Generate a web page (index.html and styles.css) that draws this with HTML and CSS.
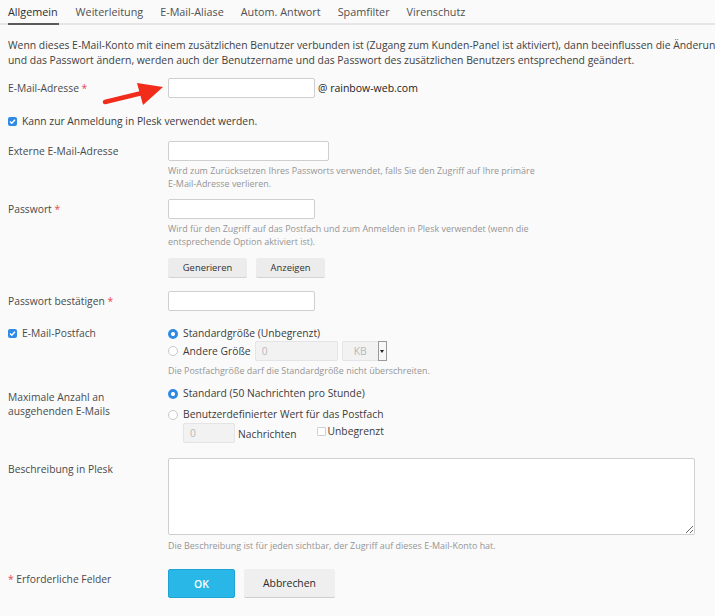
FILE: index.html
```html
<!DOCTYPE html>
<html lang="de">
<head>
<meta charset="utf-8">
<title>E-Mail-Konto</title>
<link rel="stylesheet" href="styles.css">
</head>
<body>
<nav class="tabs">
  <a class="tab active">Allgemein</a>
  <a class="tab">Weiterleitung</a>
  <a class="tab">E-Mail-Aliase</a>
  <a class="tab">Autom. Antwort</a>
  <a class="tab">Spamfilter</a>
  <a class="tab">Virenschutz</a>
</nav>

<p class="intro"><span class="line">Wenn dieses E-Mail-Konto mit einem zusätzlichen Benutzer verbunden ist (Zugang zum Kunden-Panel ist aktiviert), dann beeinflussen die Änderungen</span><span class="line">und das Passwort ändern, werden auch der Benutzername und das Passwort des zusätzlichen Benutzers entsprechend geändert.</span></p>

<form class="form">
  <div class="row row-email">
    <div class="lbl">E-Mail-Adresse <span class="req">*</span></div>
    <div class="ctl inline">
      <input class="inp w-std" type="text">
      <span class="domain">@ rainbow-web.com</span>
    </div>
    <svg class="arrow" width="70" height="32" viewBox="0 0 70 32">
      <line x1="5" y1="24" x2="42" y2="15" stroke="#f22c1a" stroke-width="4.5" stroke-linecap="round"/>
      <polygon points="37,5 63,9 43,27" fill="#f22c1a"/>
    </svg>
  </div>

  <div class="check-row row-login">
    <span class="cb on"><svg width="9" height="9" viewBox="0 0 9 9"><path d="M2 4.6 L3.8 6.3 L7 2.8" fill="none" stroke="#fff" stroke-width="1.4"/></svg></span>
    <span>Kann zur Anmeldung in Plesk verwendet werden.</span>
  </div>

  <div class="row row-ext">
    <div class="lbl">Externe E-Mail-Adresse</div>
    <div class="ctl">
      <input class="inp w-ext" type="text">
      <div class="hint">Wird zum Zurücksetzen Ihres Passworts verwendet, falls Sie den Zugriff auf Ihre primäre<br>E-Mail-Adresse verlieren.</div>
    </div>
  </div>

  <div class="row row-pw">
    <div class="lbl">Passwort <span class="req">*</span></div>
    <div class="ctl">
      <input class="inp w-std" type="password">
      <div class="hint">Wird für den Zugriff auf das Postfach und zum Anmelden in Plesk verwendet (wenn die<br>entsprechende Option aktiviert ist).</div>
      <div class="btns">
        <button type="button" class="btn btn-gen">Generieren</button>
        <button type="button" class="btn btn-show">Anzeigen</button>
      </div>
    </div>
  </div>

  <div class="row row-pw2">
    <div class="lbl">Passwort bestätigen <span class="req">*</span></div>
    <div class="ctl">
      <input class="inp w-std" type="password">
    </div>
  </div>

  <div class="row row-box">
    <div class="lbl lbl-check">
      <span class="cb on"><svg width="9" height="9" viewBox="0 0 9 9"><path d="M2 4.6 L3.8 6.3 L7 2.8" fill="none" stroke="#fff" stroke-width="1.4"/></svg></span>
      <span>E-Mail-Postfach</span>
    </div>
    <div class="ctl">
      <div class="opt opt-first"><span class="rd on"></span><span>Standardgröße (Unbegrenzt)</span></div>
      <div class="opt opt-size">
        <span class="rd"></span><span>Andere Größe</span>
        <span class="inp inp-dis w-size">0</span>
        <span class="sel">
          <span class="sel-val">KB</span>
          <span class="sel-arr"><span class="tri"></span></span>
        </span>
      </div>
      <div class="hint hint-box">Die Postfachgröße darf die Standardgröße nicht überschreiten.</div>
    </div>
  </div>

  <div class="row row-max">
    <div class="lbl lbl-max">Maximale Anzahl an<br>ausgehenden E-Mails</div>
    <div class="ctl">
      <div class="opt"><span class="rd on"></span><span>Standard (50 Nachrichten pro Stunde)</span></div>
      <div class="opt opt-custom"><span class="rd"></span><span>Benutzerdefinierter Wert für das Postfach</span></div>
      <div class="custom">
        <span class="inp inp-dis inp-num">0</span>
        <span class="unit">Nachrichten</span>
        <span class="cb-small"></span>
        <span class="unl">Unbegrenzt</span>
      </div>
    </div>
  </div>

  <div class="row row-desc">
    <div class="lbl lbl-desc">Beschreibung in Plesk</div>
    <div class="ctl">
      <textarea class="ta"></textarea>
      <div class="hint hint-desc">Die Beschreibung ist für jeden sichtbar, der Zugriff auf dieses E-Mail-Konto hat.</div>
    </div>
  </div>

  <div class="row row-foot">
    <div class="lbl"><span class="req">*</span> Erforderliche Felder</div>
    <div class="ctl foot-btns">
      <button type="button" class="btn-ok">OK</button>
      <button type="button" class="btn-cancel">Abbrechen</button>
    </div>
  </div>
</form>
</body>
</html>
```

FILE: styles.css
```css
html, body {
  margin: 0;
  padding: 0;
  background: #fafafa;
  overflow: hidden;
}

body {
  font-family: "Open Sans", "DejaVu Sans", sans-serif;
  font-size: 10.3px;
  color: #3c3c3c;
  width: 715px;
  height: 616px;
  position: relative;
}

.tabs {
  display: flex;
  gap: 17px;
  padding: 0 8px;
  border-bottom: 2px solid #e6e6e6;
  height: 23px;
}

.tab {
  display: block;
  font-size: 10.8px;
  line-height: 14px;
  padding: 5px 0 0;
  color: #505050;
  height: 23px;
  box-sizing: border-box;
  cursor: pointer;
}

.tab.active {
  color: #2e2e2e;
  border-bottom: 2px solid #5a5a5a;
  height: 25px;
  padding-right: 1px;
}

.intro {
  margin: 12.5px 0 0;
  padding: 0 8px;
  line-height: 15px;
  font-size: 10.4px;
  color: #3f3f3f;
}

.intro .line {
  display: block;
  white-space: nowrap;
}

.form {
  padding: 0 8px;
}

.row {
  display: grid;
  grid-template-columns: 160px 1fr;
  position: relative;
}

.lbl {
  line-height: 15px;
  padding-top: 3px;
  color: #4a4a4a;
  align-self: start;
}

.req {
  color: #e8474f;
}

.ctl {
  min-width: 0;
}

.inline {
  display: flex;
  align-items: center;
  gap: 3px;
}

.inp {
  display: block;
  box-sizing: border-box;
  height: 20px;
  border: 1px solid #cfcfcf;
  border-radius: 2px;
  background: #fff;
  padding: 0 6px;
  font: inherit;
  margin: 0;
  outline: none;
}

.w-std { width: 147px; }
.w-ext { width: 161px; }
.w-size { width: 83px; }

.domain {
  color: #222;
  font-size: 10.5px;
}

.arrow {
  position: absolute;
  left: 92px;
  top: 0;
}

.row-email { margin-top: 10.5px; }

.check-row {
  display: flex;
  align-items: center;
  gap: 5px;
  line-height: 15px;
  margin-top: 15.5px;
  color: #3c3c3c;
}

.cb {
  width: 9px;
  height: 9px;
  border-radius: 2px;
  background: #2f8ae6;
  display: inline-flex;
  flex: none;
}

.row-ext { margin-top: 12.5px; }

.hint {
  font-size: 8.95px;
  line-height: 12.5px;
  color: #959595;
  margin-top: 4px;
}

.row-pw { margin-top: 9px; }

.btns {
  display: flex;
  gap: 9px;
  margin-top: 10px;
}

.btn {
  height: 20px;
  box-sizing: border-box;
  border: none;
  border-bottom: 1px solid #d3d3d3;
  border-radius: 2px;
  background: #ececec;
  font-family: inherit;
  font-size: 9.4px;
  color: #333;
  padding: 0;
  cursor: pointer;
}

.btn-gen { width: 79px; }
.btn-show { width: 69px; }

.row-pw2 { margin-top: 13px; }

.row-box { margin-top: 15px; }

.lbl-check {
  display: flex;
  align-items: center;
  gap: 5px;
  padding-top: 0;
}

.opt {
  display: flex;
  align-items: center;
  gap: 5px;
  line-height: 15px;
  color: #3c3c3c;
}

.opt-size {
  height: 20px;
}

.rd {
  width: 10px;
  height: 10px;
  box-sizing: border-box;
  border-radius: 50%;
  border: 1px solid #c9c9c9;
  background: #fff;
  flex: none;
}

.rd.on {
  border: none;
  background: radial-gradient(circle, #fff 0 1.8px, #2f8ae6 2.3px);
}

.inp-dis {
  background: #f2f2f2;
  border-color: #e4e4e4;
  color: #b8b8b8;
  line-height: 18px;
  margin-left: -1px;
}

.inp-num {
  width: 52px;
  margin-left: 0;
}

.sel {
  display: flex;
  height: 20px;
  margin-left: -1px;
}

.sel-val {
  width: 36px;
  box-sizing: border-box;
  border: 1px solid #e4e4e4;
  border-right: none;
  background: #f2f2f2;
  color: #b8b8b8;
  text-align: center;
  line-height: 18px;
  border-radius: 2px 0 0 2px;
}

.sel-arr {
  width: 9px;
  box-sizing: border-box;
  border: 1px solid #9a9a9a;
  background: #f7f7f7;
  display: flex;
  align-items: center;
  justify-content: center;
}

.tri {
  width: 0;
  height: 0;
  border-left: 2.5px solid transparent;
  border-right: 2.5px solid transparent;
  border-top: 3px solid #222;
}

.hint-box { margin-top: 3.5px; }

.row-max { margin-top: 9px; }

.lbl-max {
  line-height: 14px;
  padding-top: 3.5px;
}

.opt-custom { margin-top: 6px; }

.custom {
  display: flex;
  align-items: center;
  margin-top: 1px;
  padding-left: 15px;
}

.unit {
  margin-left: 3px;
  padding-top: 2px;
}

.cb-small {
  width: 7px;
  height: 7px;
  border: 1px solid #d0d0d0;
  background: #fff;
  border-radius: 1px;
  margin-left: 20px;
  margin-top: -4px;
}

.unl {
  margin-left: 2px;
  margin-top: -4px;
}

.row-desc { margin-top: 15px; }

.lbl-desc {
  padding-top: 4px;
}

.ta {
  display: block;
  width: 527px;
  height: 77px;
  box-sizing: border-box;
  border: 1px solid #cfcfcf;
  border-radius: 2px;
  background: #fff;
  margin: 0;
  font: inherit;
  resize: both;
}

.hint-desc {
  margin-top: 3.5px;
  line-height: 13px;
}

.row-foot { margin-top: 17.5px; }

.foot-btns {
  display: flex;
  gap: 9px;
}

.btn-ok, .btn-cancel {
  height: 29px;
  box-sizing: border-box;
  border-radius: 2px;
  font-family: "Open Sans", sans-serif;
  font-size: 10.4px;
  padding: 0;
  cursor: pointer;
}

.btn-ok {
  width: 67px;
  background: #29b7e7;
  border: 1px solid #1ea3d3;
  color: #fff;
  font-weight: 600;
}

.btn-cancel {
  width: 91px;
  background: #efefef;
  border: none;
  border-bottom: 1px solid #cfcfcf;
  color: #2b2b2b;
}
```
